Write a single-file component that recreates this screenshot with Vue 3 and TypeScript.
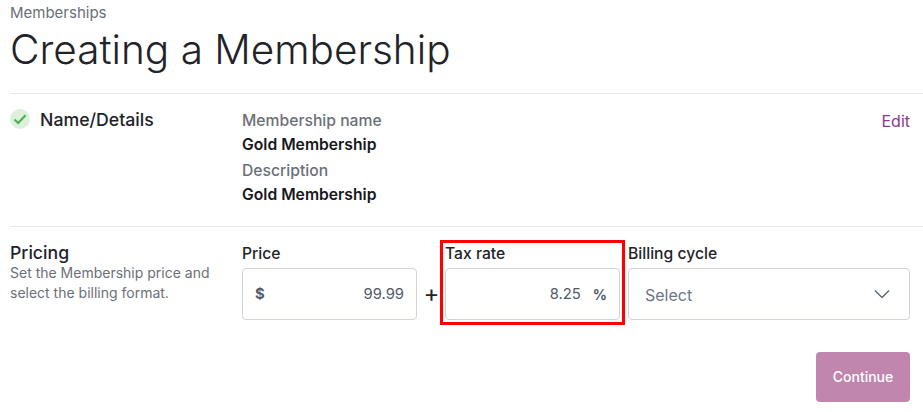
<script setup lang="ts">
const details = [
  { label: 'Membership name', value: 'Gold Membership' },
  { label: 'Description', value: 'Gold Membership' },
]
</script>

<template>
  <main class="page">
    <div class="crumb">Memberships</div>
    <h1 class="title">Creating a Membership</h1>

    <section class="row details">
      <div class="side">
        <span class="check">
          <svg width="14" height="14" viewBox="0 0 14 14" fill="none">
            <path d="M1.5 7.5 5.2 11 12.5 3.2" stroke="#4caf50" stroke-width="2" />
          </svg>
        </span>
        <h2 class="step step-top">Name/Details</h2>
      </div>
      <div class="info">
        <div v-for="d in details" :key="d.label" class="pair">
          <div class="info-label">{{ d.label }}</div>
          <div class="info-value">{{ d.value }}</div>
        </div>
      </div>
      <a class="edit">Edit</a>
    </section>

    <section class="row pricing">
      <div class="side-col">
        <h2 class="step">Pricing</h2>
        <p class="help">Set the Membership price and select the billing format.</p>
      </div>
      <div class="fields">
        <div class="field price">
          <label class="label">Price</label>
          <div class="box">
            <span class="unit">$</span>
            <span class="num">99.99</span>
          </div>
        </div>
        <span class="plus">+</span>
        <div class="field tax">
          <label class="label">Tax rate</label>
          <div class="box">
            <span class="num">8.25</span>
            <span class="unit pct">%</span>
          </div>
          <div class="highlight"></div>
        </div>
        <div class="field cycle">
          <label class="label">Billing cycle</label>
          <div class="box select">
            <span class="placeholder">Select</span>
            <svg width="16" height="10" viewBox="0 0 16 10" fill="none">
              <path d="M1 1.5 8 8.5 15 1.5" stroke="#5f6b7a" stroke-width="1.5" />
            </svg>
          </div>
        </div>
      </div>
    </section>

    <div class="actions">
      <button class="continue" type="button">Continue</button>
    </div>
  </main>
</template>

<style>
html, body { margin: 0; background: #fff; }
</style>

<style scoped>
.page {
  width: 923px;
  height: 412px;
  box-sizing: border-box;
  padding: 4px 13px 0 10px;
  font-family: Inter, sans-serif;
  color: #1f2127;
  overflow: hidden;
}
.crumb { font-size: 15px; line-height: 18px; color: #6b6f78; }
.title {
  margin: 3px 0 0;
  font-size: 40.5px;
  line-height: 50px;
  font-weight: 300;
  color: #212328;
  height: 68px;
}
.row { display: flex; border-top: 1px solid #e8e8ea; }
.details { height: 133px; box-sizing: border-box; padding-top: 15px; margin-right: -13px; padding-right: 13px; }
.side { width: 232px; display: flex; align-items: flex-start; gap: 10px; }
.check {
  width: 20px;
  height: 20px;
  border-radius: 50%;
  background: #dcf0dc;
  display: flex;
  align-items: center;
  justify-content: center;
}
.step { margin: 0; font-size: 17.7px; line-height: 20px; font-weight: 500; color: #212328; }
.step-top { margin-top: 1px; }
.info { flex: 1; }
.pair { margin-bottom: 3px; }
.info-label { font-size: 15.7px; line-height: 22px; font-weight: 500; color: #6b6f78; margin-top: 1px; }
.info-value { font-size: 15.7px; line-height: 24px; font-weight: 600; color: #17181c; margin-top: 1px; }
.edit { font-size: 16px; line-height: 24px; color: #8a3a8c; }
.pricing { height: 126px; box-sizing: border-box; padding-top: 16px; margin-right: -13px; padding-right: 13px; }
.side-col { width: 232px; }
.help { margin: 0; font-size: 14px; line-height: 20px; color: #6b6f78; width: 215px; }
.fields { display: flex; align-items: flex-start; flex: 1; }
.field { position: relative; display: flex; flex-direction: column; }
.price { width: 175px; }
.tax { width: 175px; }
.cycle { flex: 1; margin-left: 8px; }
.label { font-size: 15.7px; line-height: 22px; font-weight: 500; color: #212328; margin-bottom: 3px; }
.box {
  height: 52px;
  box-sizing: border-box;
  border: 1px solid #cfd3da;
  border-radius: 4px;
  background: #fff;
  display: flex;
  align-items: center;
  justify-content: space-between;
  padding: 0 12px;
  font-size: 14.8px;
  color: #515a68;
}
.unit { font-weight: 700; color: #515a68; }
.num { margin-left: auto; }
.pct { margin-left: 12px; font-size: 14px; }
.plus { width: 28px; margin-top: 39px; padding-left: 1px; box-sizing: border-box; text-align: center; font-size: 24px; line-height: 24px; color: #212328; }
.highlight {
  position: absolute;
  inset: -3px -5px -5px -5px;
  border: 3px solid #f00;
  pointer-events: none;
}
.select { padding: 0 19px 0 16px; }
.placeholder { font-size: 16px; margin-top: 2px; color: #6b7686; }
.actions { display: flex; justify-content: flex-end; }
.continue {
  width: 94px;
  height: 50px;
  border: 0;
  border-radius: 4px;
  padding: 0 0 2px;
  background: #c086ae;
  color: #fff;
  font: 500 14px Inter, sans-serif;
}
</style>
